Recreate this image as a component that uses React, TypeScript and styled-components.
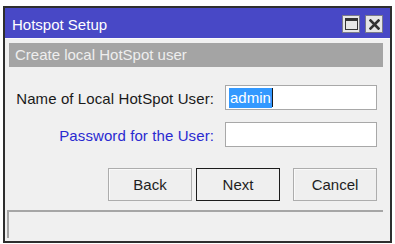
import React from "react"
import styled, { createGlobalStyle } from "styled-components"

const GlobalStyle = createGlobalStyle`
  html, body {
    margin: 0;
    padding: 0;
    background: #ffffff;
  }
  * {
    box-sizing: border-box;
  }
`

function App() {
  return (
    <>
      <GlobalStyle />
      <Page>
        <Window>
          <TitleBar>
            <Title>Hotspot Setup</Title>
            <TitleButtons>
              <TitleButton aria-label="maximize">
                <svg width="13" height="12" viewBox="0 0 13 12">
                  <rect x="0.5" y="0.5" width="12" height="11" fill="none" stroke="#333" />
                  <rect x="0" y="0" width="13" height="3" fill="#333" />
                </svg>
              </TitleButton>
              <TitleButton aria-label="close">
                <svg width="11" height="11" viewBox="0 0 11 11">
                  <path d="M1.5 1.5 L9.5 9.5 M9.5 1.5 L1.5 9.5" stroke="#333" strokeWidth="2.6" strokeLinecap="square" />
                </svg>
              </TitleButton>
            </TitleButtons>
          </TitleBar>
          <Body>
            <SubTitle>Create local HotSpot user</SubTitle>
            <Form>
              <Label>Name of Local HotSpot User:</Label>
              <Field>
                <Selected>admin</Selected>
                <Caret />
              </Field>
              <Label $accent>Password for the User:</Label>
              <Field />
            </Form>
            <ButtonRow>
              <Button>Back</Button>
              <Button $primary>Next</Button>
              <Button $spaced>Cancel</Button>
            </ButtonRow>
            <StatusBar />
          </Body>
        </Window>
      </Page>
    </>
  )
}

export default App

const Page = styled.div`
  width: 395px;
  height: 244px;
  padding: 6px 0 0 3px;
  font-family: "Liberation Sans", Arial, sans-serif;
`

const Window = styled.div`
  width: 389px;
  height: 237px;
  border: 2px solid #2e2e2e;
  background: #f0f0f0;
  display: flex;
  flex-direction: column;
`

const TitleBar = styled.div`
  height: 30px;
  background: #4848c6;
  display: flex;
  align-items: center;
  justify-content: space-between;
  padding: 0 7px 0 7px;
`

const Title = styled.div`
  color: #ffffff;
  font-size: 15px;
  padding-top: 2px;
`

const TitleButtons = styled.div`
  display: flex;
  gap: 5px;
  padding-top: 2px;
`

const TitleButton = styled.div`
  width: 18px;
  height: 18px;
  background: #e6e6e6;
  border: 1px solid #7a7a8a;
  display: flex;
  align-items: center;
  justify-content: center;
`

const Body = styled.div`
  flex: 1;
  display: flex;
  flex-direction: column;
  padding: 4px 7px 3px 2px;
  border-top: 1px solid #fbfbfb;
`

const SubTitle = styled.div`
  height: 24px;
  margin-left: 2px;
  background: #a4a4a4;
  color: #eeeeee;
  font-size: 15px;
  line-height: 24px;
  padding-left: 6px;
`

const Form = styled.div`
  display: grid;
  grid-template-columns: 207px 152px;
  column-gap: 11px;
  row-gap: 12px;
  align-items: center;
  margin-top: 18px;
`

const Label = styled.div<{ $accent?: boolean }>`
  text-align: right;
  font-size: 15px;
  letter-spacing: 0.1px;
  color: ${props => (props.$accent ? "#2a2ad0" : "#1a1a1a")};
  padding-top: 1px;
`

const Field = styled.div`
  height: 25px;
  background: #ffffff;
  border: 1px solid #a8a8a8;
  display: flex;
  align-items: center;
  padding-left: 3px;
`

const Selected = styled.span`
  background: #3399ff;
  color: #ffffff;
  font-size: 15px;
  line-height: 20px;
  padding: 0 1px;
`

const Caret = styled.span`
  width: 1px;
  height: 19px;
  background: #1a1a1a;
`

const ButtonRow = styled.div`
  display: flex;
  justify-content: flex-end;
  gap: 4px;
  margin-top: 21px;
  padding-right: 6px;
`

const Button = styled.div<{ $primary?: boolean; $spaced?: boolean }>`
  width: 84px;
  height: 33px;
  display: flex;
  align-items: center;
  justify-content: center;
  font-size: 15px;
  color: #1e1e1e;
  background: #efefef;
  border: 1px solid ${props => (props.$primary ? "#1c1c1c" : "#adadad")};
  box-shadow: ${props => (props.$primary ? "none" : "inset 1px 1px 0 #fafafa")};
  margin-left: ${props => (props.$spaced ? "9px" : "0")};
`

const StatusBar = styled.div`
  flex: 1;
  margin-top: 9px;
  border-top: 2px solid #a6a6a6;
  border-left: 2px solid #a6a6a6;
  background: #f0f0f0;
`
